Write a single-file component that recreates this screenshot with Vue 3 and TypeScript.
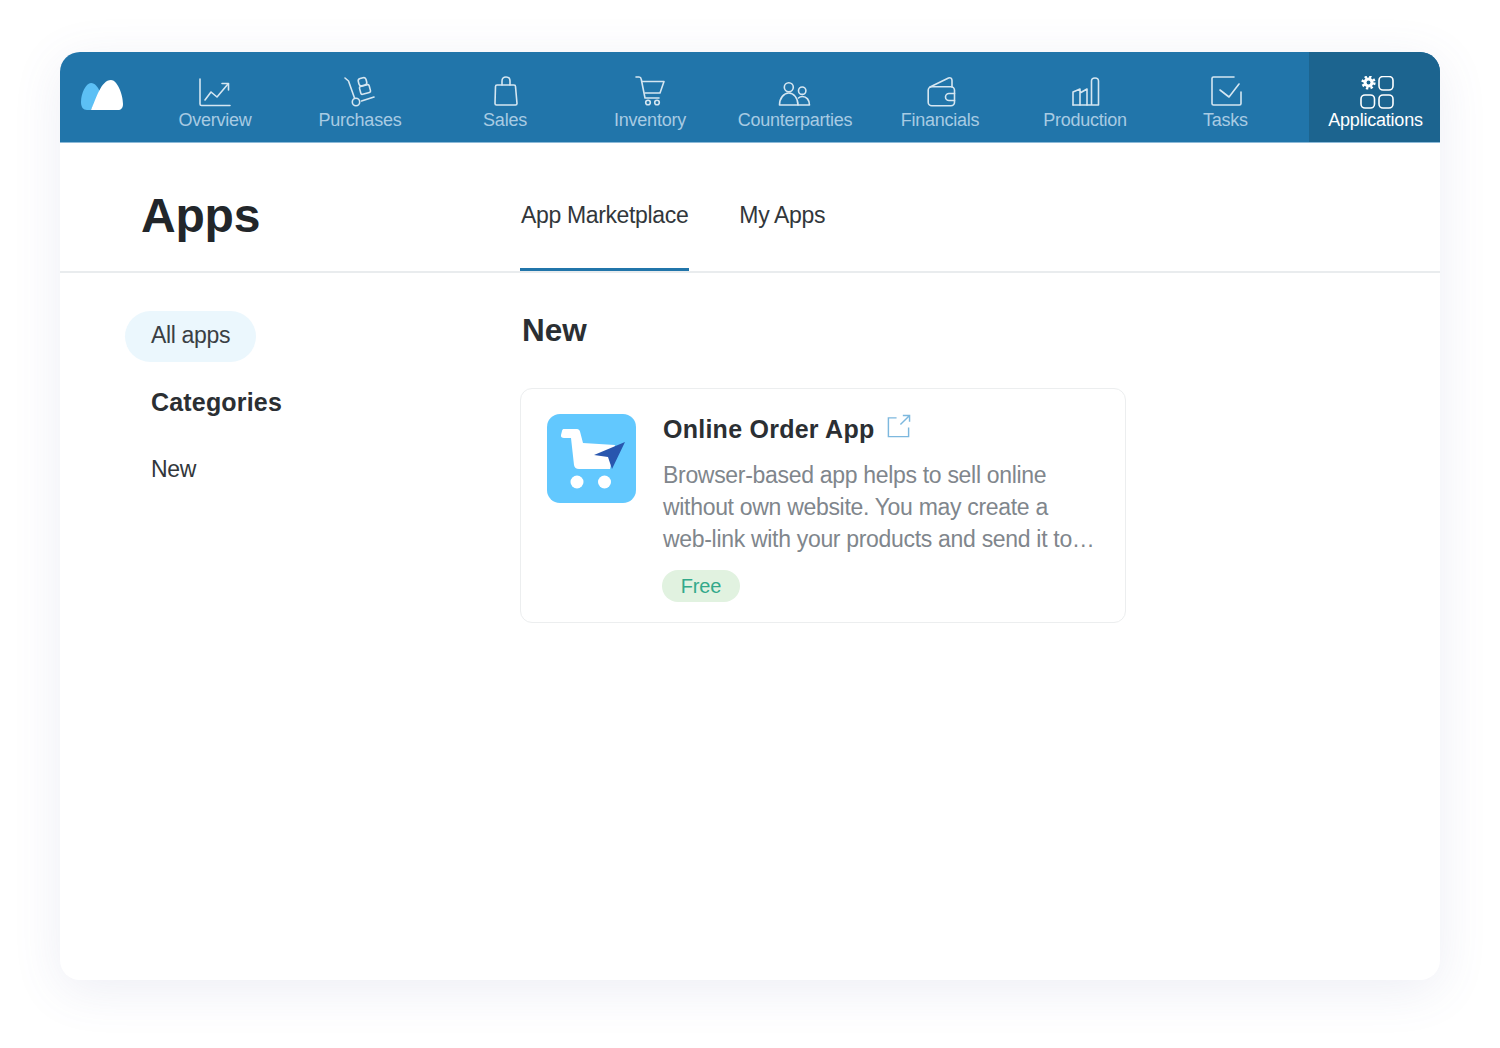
<template>
  <div class="page">
    <div class="window">
      <nav class="topnav">
        <div class="logo">
          <svg width="44" height="32" viewBox="0 0 44 32">
            <path d="M1 23C1 14 6 4 11 4c4 0 7 4 9 9L11 31H7C3 31 1 28 1 23z" fill="#5cc0f5" />
            <path d="M11 31C16 20 21 1 31 1c6 0 12 14 12 24 0 4-2 6-5 6z" fill="#fff" />
          </svg>
        </div>
        <a v-for="item in navItems" :key="item.label" class="nav-item" :class="item.cls">
          <svg class="nav-icon" width="40" height="34" viewBox="0 0 40 34" fill="none" stroke="currentColor"
            stroke-width="1.6" stroke-linecap="round" stroke-linejoin="round" v-html="item.icon"></svg>
          <span>{{ item.label }}</span>
        </a>
      </nav>

      <header class="apps-head">
        <h1>Apps</h1>
        <div class="tabs">
          <a class="tab active">App Marketplace</a>
          <a class="tab">My Apps</a>
        </div>
      </header>

      <div class="body">
        <aside class="side">
          <div class="pill">All apps</div>
          <div class="cat-title">Categories</div>
          <div class="cat-link">New</div>
        </aside>
        <main class="content">
          <h2>New</h2>
          <div class="card">
            <div class="app-icon">
              <svg width="89" height="89" viewBox="0 0 89 89">
                <path d="M17 15H30c1.500 0 2.500 1 3 2.500L36 29l32 2-5 24H32c-3 0-4.500-1.500-5-4L24 24H17c-2 0-3.500-1-3-3l1-4c.3-1.500 1-2 2-2z" fill="#fff" />
                <circle cx="30" cy="68" r="6.500" fill="#fff" />
                <circle cx="57.500" cy="68" r="6.500" fill="#fff" />
                <path d="M78 28 47 41l14 2 4 12z" fill="#2856ae" />
              </svg>
            </div>
            <div class="card-text">
              <div class="card-title">
                <span>Online Order App</span>
                <svg width="25" height="25" viewBox="0 0 26 26" fill="none" stroke="#7db8de" stroke-width="1.5">
                  <path d="M11 4H2.500v19.500h21V14M15 11 24 2M17.500 1.500H24.500V8" />
                </svg>
              </div>
              <p class="desc">Browser-based app helps to sell online without own website. You may create a web-link with your products and send it to…</p>
              <span class="badge">Free</span>
            </div>
          </div>
        </main>
      </div>
    </div>
  </div>
</template>

<script setup lang="ts">
interface NavItem {
  label: string
  icon: string
  cls?: string
}

const navItems: NavItem[] = [
  {
    label: 'Overview',
    icon: '<path d="M5 3v25c0 1 .5 1.500 1.500 1.500H35"/><path d="M10 24l6-8 6 5 11-13"/><path d="M27 7.500h6.500V14"/>',
  },
  {
    label: 'Purchases',
    icon: '<path d="M5 2l3.500 3L14.500 22"/><circle cx="16" cy="26" r="3.700"/><path d="M21.500 25l12.500-4"/><rect x="20" y="9.500" width="10" height="8" rx="1.500" transform="rotate(-15 25 13.500)"/><rect x="18.500" y="2" width="8" height="7.500" rx="2.500" transform="rotate(-15 22.500 5.700)"/>',
  },
  {
    label: 'Sales',
    icon: '<path d="M12 9h17c1 0 1.500.5 1.500 1.500L32 27.500c0 1-.5 1.500-1.500 1.500h-19C10.500 29 10 28.500 10 27.500L10.500 10.500C10.500 9.500 11 9 12 9z"/><path d="M17 9V5c0-2.500 1.500-4 4-4s4 1.500 4 4v4"/>',
  },
  {
    label: 'Inventory',
    icon: '<path d="M6 1h3c1 0 2 .8 2.200 2L15 22h14"/><path d="M12 5.500h22l-4 11.500H15"/><circle cx="18" cy="26.500" r="2.300"/><circle cx="27" cy="26.500" r="2.300"/>',
  },
  {
    label: 'Counterparties',
    icon: '<circle cx="13.800" cy="11.300" r="4.500"/><circle cx="27.200" cy="14.700" r="3.700"/><path d="M4.500 29C4.500 22 9 17 13.800 17S23 22 23 29z"/><path d="M23 29H34.500c0-5-3-8.500-7-8.500-1.500 0-3 .5-4 1.500"/>',
  },
  {
    label: 'Financials',
    icon: '<path d="M10 11L28.500 2c2-.8 3.500.3 3.500 2.500V11"/><rect x="8.200" y="10.700" width="26.300" height="19" rx="3.500"/><path d="M34.500 17.500H29a3.500 3.500 0 0 0 0 7h5.500"/>',
  },
  {
    label: 'Production',
    icon: '<path d="M8 29V16l7-3v16M15 17l7-4v16"/><path d="M8 29H33.500V5c0-2-1.300-3-3.500-3s-3.500 1-3.500 3V29"/>',
  },
  {
    label: 'Tasks',
    icon: '<path d="M35 16v11.500c0 1-.5 1.500-1.500 1.500H7.500C6.500 29 6 28.500 6 27.500V2.500C6 1.500 6.500 1 7.500 1H28"/><path d="M14 14l9 7L33 8"/>',
  },
  {
    label: 'Applications',
    cls: 'active',
    icon: '<circle cx="12.500" cy="6.500" r="5.800" stroke-width="2.600" stroke-dasharray="2.300 2.250" stroke-linecap="butt"/><circle cx="12.500" cy="6.500" r="5" fill="currentColor" stroke="none"/><circle cx="12.500" cy="6.500" r="1.900" fill="#1c648f" stroke="none"/><rect x="23" y="0.500" width="14" height="13.500" rx="4"/><rect x="5" y="19" width="13.500" height="13" rx="4"/><rect x="23" y="19" width="14" height="13" rx="4"/>',
  },
]
</script>

<style scoped>
.page {
  width: 1500px;
  height: 1048px;
  padding: 52px 60px 68px;
  box-sizing: border-box;
  background: #fff;
  font-family: "Liberation Sans", Arial, sans-serif;
  color: #2b2f33;
}

.window {
  height: 928px;
  border-radius: 20px;
  background: #fff;
  box-shadow: 0 10px 50px rgba(90, 100, 160, 0.11);
  overflow: hidden;
}

.topnav {
  display: flex;
  height: 91px;
  background: #2175aa;
  border-bottom: 1px solid #8dbad8;
  box-sizing: border-box;
}

.logo {
  width: 82px;
  display: flex;
  align-items: flex-start;
  padding: 27px 0 0 20px;
  box-sizing: border-box;
}

.nav-item {
  width: 145px;
  display: flex;
  flex-direction: column;
  align-items: center;
  padding: 24px 0 0 1px;
  box-sizing: border-box;
  font-size: 18px;
  letter-spacing: -0.25px;
  color: #a8cbe3;
}

.nav-item:nth-of-type(8) {
  width: 136px;
}

.nav-item.active {
  width: 131px;
  margin-left: auto;
  padding-left: 2px;
  background: #1c648f;
  color: #fff;
  letter-spacing: -0.22px;
}

.nav-icon {
  display: block;
  color: #d5e6f1;
}

.nav-item.active .nav-icon {
  color: #fff;
}

.apps-head {
  display: flex;
  height: 130px;
  border-bottom: 2px solid #e9ecee;
  box-sizing: border-box;
}

.apps-head h1 {
  width: 460px;
  margin: 0;
  padding: 43px 0 0 81px;
  box-sizing: border-box;
  font-size: 48px;
  line-height: 60px;
  letter-spacing: -0.2px;
  color: #22262a;
}

.tabs {
  display: flex;
  gap: 49px;
}

.tab {
  height: 128px;
  padding: 59px 1px 0;
  box-sizing: border-box;
  font-size: 23px;
  line-height: 27px;
  letter-spacing: -0.35px;
  color: #32373b;
}

.tab.active {
  border-bottom: 3px solid #2175aa;
}

.body {
  display: flex;
}

.side {
  width: 460px;
  padding: 38px 0 0 65px;
  box-sizing: border-box;
}

.pill {
  width: 131px;
  height: 51px;
  border-radius: 26px;
  background: #ebf7fd;
  box-sizing: border-box;
  padding-left: 26px;
  font-size: 23px;
  line-height: 49px;
  letter-spacing: -0.35px;
  color: #3a3f44;
}

.cat-title {
  margin: 26px 0 0 26px;
  font-size: 25px;
  line-height: 28px;
  font-weight: 700;
  letter-spacing: 0.18px;
  color: #2b2f33;
}

.cat-link {
  margin: 40px 0 0 26px;
  font-size: 23px;
  line-height: 27px;
  letter-spacing: -0.35px;
  color: #32373b;
}

.content {
  flex: 1;
  padding-top: 37px;
}

.content h2 {
  margin: 0 0 0 2px;
  font-size: 31.500px;
  line-height: 40px;
  color: #2b2f33;
}

.card {
  display: flex;
  width: 606px;
  height: 235px;
  margin-top: 38px;
  padding: 25px 26px 0;
  box-sizing: border-box;
  border: 1.500px solid #eceeef;
  border-radius: 12px;
}

.app-icon {
  flex: none;
  width: 89px;
  height: 89px;
  border-radius: 13px;
  background: #62c8fe;
}

.app-icon svg {
  display: block;
}

.card-text {
  margin-left: 27px;
  min-width: 0;
}

.card-title {
  display: flex;
  align-items: flex-start;
  gap: 12px;
  font-size: 25px;
  line-height: 30px;
  font-weight: 700;
  letter-spacing: 0.25px;
  color: #2b2f33;
}

.desc {
  margin: 15px 0 0;
  font-size: 23px;
  line-height: 32px;
  letter-spacing: -0.31px;
  color: #80868c;
}

.badge {
  display: inline-block;
  margin: 15px 0 0 -1px;
  width: 78px;
  height: 32px;
  border-radius: 16px;
  background: #e1f2e0;
  text-align: center;
  font-size: 20px;
  line-height: 32px;
  letter-spacing: -0.1px;
  color: #33a98a;
}
</style>
